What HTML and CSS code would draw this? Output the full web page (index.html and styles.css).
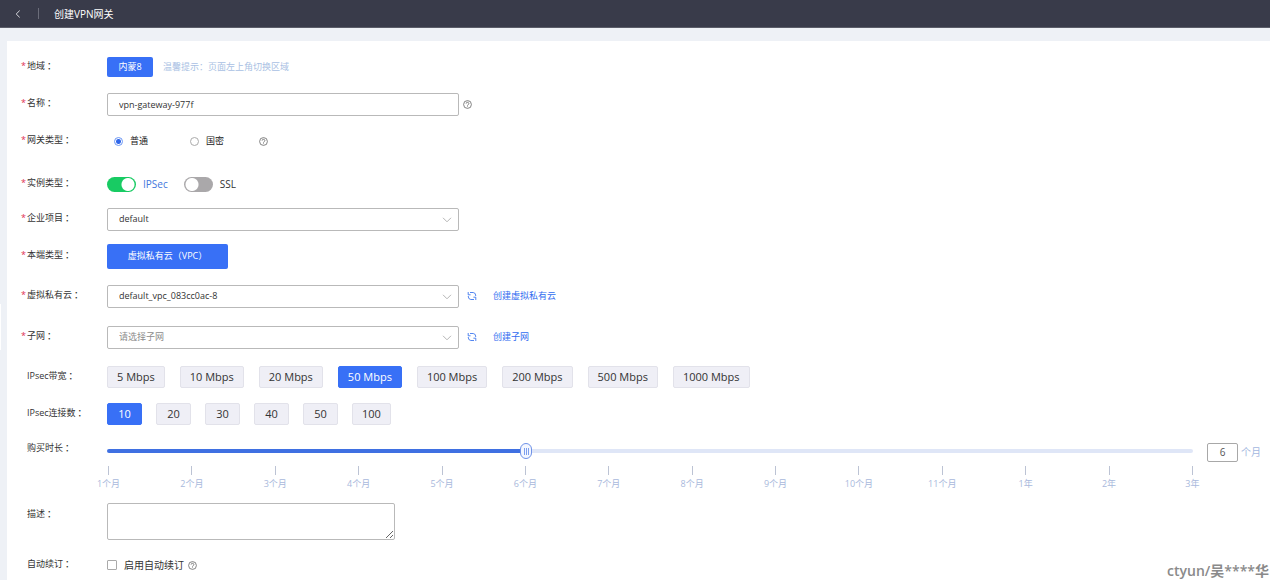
FILE: index.html
```html
<!DOCTYPE html>
<html lang="zh-CN">
<head>
<meta charset="utf-8">
<meta name="viewport" content="width=device-width, initial-scale=1">
<title>创建VPN网关</title>
<link rel="stylesheet" href="styles.css">
</head>
<body>
<svg class="sprite" aria-hidden="true">
  <symbol id="help" viewBox="0 0 9 9">
    <circle cx="4.5" cy="4.5" r="3.9"/>
    <path d="M3.1 3.6a1.4 1.3 0 1 1 2.1 1.1q-.7.3-.7 1M4.5 6.4v.7"/>
  </symbol>
  <symbol id="arrow" viewBox="0 0 10 6">
    <path d="M1 .8l4 4 4-4"/>
  </symbol>
  <symbol id="refresh" viewBox="0 0 10 10">
    <path d="M3 1.5H6.2Q8.8 1.7 8.8 5M1.2 1v2.8h2.4M7 8.5H3.8Q1.2 8.3 1.2 5M8.8 9V6.2H6.4"/>
  </symbol>
</svg>
<header class="topbar">
  <button class="back" type="button" aria-label="返回"><svg viewBox="0 0 6 8"><path d="M4.7.6L1.2 4l3.5 3.4"/></svg></button>
  <h1 class="title">创建VPN网关</h1>
</header>
<main class="page">
  <span class="drawer-handle"></span>
  <form class="card">
    <div class="row">
      <span class="label required">地域<span class="colon">：</span></span>
      <div class="control">
        <button class="btn region" type="button">内蒙8</button>
        <span class="tip">温馨提示：页面左上角切换区域</span>
      </div>
    </div>
    <div class="row">
      <label class="label required" for="name">名称<span class="colon">：</span></label>
      <div class="control name-control">
        <input class="field" id="name" type="text" value="vpn-gateway-977f">
        <svg class="help"><use href="#help"/></svg>
      </div>
    </div>
    <div class="row">
      <span class="label required">网关类型<span class="colon">：</span></span>
      <div class="control radios">
        <label class="radio"><input type="radio" name="gw" checked>普通</label>
        <label class="radio"><input type="radio" name="gw">国密</label>
        <svg class="help"><use href="#help"/></svg>
      </div>
    </div>
    <div class="row gap-xl">
      <span class="label required">实例类型<span class="colon">：</span></span>
      <div class="control switches">
        <label class="switch on"><input type="checkbox" checked>IPSec</label>
        <label class="switch"><input type="checkbox">SSL</label>
      </div>
    </div>
    <div class="row gap-s">
      <label class="label required" for="project">企业项目<span class="colon">：</span></label>
      <div class="control">
        <div class="select"><select class="field" id="project"><option>default</option></select><svg><use href="#arrow"/></svg></div>
      </div>
    </div>
    <div class="row">
      <span class="label required">本端类型<span class="colon">：</span></span>
      <div class="control"><button class="btn local" type="button">虚拟私有云（VPC）</button></div>
    </div>
    <div class="row gap-m">
      <label class="label required" for="vpc">虚拟私有云<span class="colon">：</span></label>
      <div class="control">
        <div class="select"><select class="field" id="vpc"><option>default_vpc_083cc0ac-8</option></select><svg><use href="#arrow"/></svg></div>
        <button class="refresh" type="button" aria-label="刷新"><svg><use href="#refresh"/></svg></button>
        <a class="link" href="#">创建虚拟私有云</a>
      </div>
    </div>
    <div class="row gap-l">
      <label class="label required" for="subnet">子网<span class="colon">：</span></label>
      <div class="control">
        <div class="select"><select class="field empty" id="subnet"><option>请选择子网</option></select><svg><use href="#arrow"/></svg></div>
        <button class="refresh" type="button" aria-label="刷新"><svg><use href="#refresh"/></svg></button>
        <a class="link" href="#">创建子网</a>
      </div>
    </div>
    <div class="row gap-m">
      <span class="label">IPsec带宽<span class="colon">：</span></span>
      <div class="control chips wide">
        <button class="chip" type="button">5 Mbps</button>
        <button class="chip" type="button">10 Mbps</button>
        <button class="chip" type="button">20 Mbps</button>
        <button class="chip active" type="button">50 Mbps</button>
        <button class="chip" type="button">100 Mbps</button>
        <button class="chip" type="button">200 Mbps</button>
        <button class="chip" type="button">500 Mbps</button>
        <button class="chip" type="button">1000 Mbps</button>
      </div>
    </div>
    <div class="row">
      <span class="label">IPsec连接数<span class="colon">：</span></span>
      <div class="control chips">
        <button class="chip active" type="button">10</button>
        <button class="chip" type="button">20</button>
        <button class="chip" type="button">30</button>
        <button class="chip" type="button">40</button>
        <button class="chip" type="button">50</button>
        <button class="chip" type="button">100</button>
      </div>
    </div>
    <div class="row gap-s">
      <label class="label" for="duration">购买时长<span class="colon">：</span></label>
      <div class="duration">
        <div class="slider">
          <input class="range" id="duration" type="range" min="1" max="14" value="6" style="--fill:38.5%">
          <ul class="ticks">
            <li>1个月</li><li>2个月</li><li>3个月</li><li>4个月</li><li>5个月</li><li>6个月</li><li>7个月</li><li>8个月</li><li>9个月</li><li>10个月</li><li>11个月</li><li>1年</li><li>2年</li><li>3年</li>
          </ul>
        </div>
        <label class="months"><input type="text" value="6">个月</label>
      </div>
    </div>
    <div class="row">
      <label class="label" for="desc">描述<span class="colon">：</span></label>
      <textarea class="desc" id="desc"></textarea>
    </div>
    <div class="row">
      <span class="label">自动续订<span class="colon">：</span></span>
      <div class="control">
        <label class="check"><input type="checkbox">启用自动续订</label>
        <svg class="help"><use href="#help"/></svg>
      </div>
    </div>
  </form>
  <div class="watermark">ctyun/吴****华</div>
</main>
</body>
</html>
```
FILE: styles.css
```css
* { box-sizing: border-box; }

body {
  margin: 0;
  height: 100vh;
  display: flex;
  flex-direction: column;
  overflow: hidden;
  background: #eef1f6;
  color: #333;
  font: 9px/20px "Open Sans", "Noto Sans CJK SC", sans-serif;
}

button, input, select, textarea { font: inherit; color: inherit; margin: 0; }
button { border: 0; padding: 0; background: none; cursor: pointer; }
svg { fill: none; stroke: currentColor; flex: none; }
.sprite { position: absolute; width: 0; height: 0; }

.topbar {
  height: 28px;
  flex: none;
  display: flex;
  align-items: center;
  padding-left: 15px;
  background: #393b4a;
  border-bottom: 1px solid #5b5d69;
  color: #fff;
}
.back { display: flex; width: 24px; height: 11px; align-items: center; border-right: 1px solid #6b6d7a; }
.back svg { width: 6px; height: 8px; color: #d8d9de; }
.title { margin: 0 0 0 15px; font-size: 10px; font-weight: 400; }

.page { position: relative; flex: 1; display: flex; min-height: 0; padding: 13px 0 0 7px; }
.drawer-handle { position: absolute; left: 0; top: 276px; width: 1px; height: 46px; background: #fff; }
.card { flex: 1; min-width: 0; padding: 14px 9px 0 14px; background: #fff; }

.row { display: flex; align-items: flex-start; margin-top: 13px; }
.row:first-child { margin-top: 0; }
.row.gap-s { margin-top: 11px; }
.row.gap-m { margin-top: 16px; }
.row.gap-l { margin-top: 17px; }
.row.gap-xl { margin-top: 19px; }

.label { flex: none; width: 86px; padding: 1px 0 0 6px; white-space: nowrap; }
.label.required { padding-left: 0; }
.label.required::before { content: "*"; display: inline-block; width: 6px; color: #e0304f; }
.colon { margin-left: 2px; font-weight: 500; }

.control { flex: 1; min-width: 0; height: 24px; display: flex; align-items: center; }

.btn { background: #3870f6; color: #fff; border-radius: 2px; }
.region { width: 46px; height: 20px; }
.local { width: 121px; height: 25px; }
.tip { margin-left: 10px; color: #a9bfe3; }

.field {
  width: 352px;
  height: 23px;
  padding: 0 11px;
  border: 1px solid #b9b9b9;
  border-radius: 2px;
  background: #fff;
  appearance: none;
  outline: 0;
}
.field.empty { color: #8c8c8c; }
.select { position: relative; display: flex; }
.select svg { position: absolute; right: 7px; top: 9px; width: 10px; height: 6px; color: #b5b5b5; pointer-events: none; }
.name-control { gap: 4px; }
.help { width: 9px; height: 9px; color: #666; stroke-width: 0.8; }

.radios { padding-left: 7px; }
.radio { display: flex; align-items: center; gap: 7px; width: 76px; color: #222; }
.radio + .help { margin-left: -7px; }
.radio input { appearance: none; width: 9px; height: 9px; border: 1px solid #aaa; border-radius: 50%; background: #fff; }
.radio input:checked { border-color: #6d97f3; background: radial-gradient(circle, #2f66ea 2px, #fff 3px); }

.switches { gap: 16px; }
.switch { display: flex; align-items: center; gap: 7px; font-size: 10px; }
.switch.on { color: #4477dd; }
.switch input {
  appearance: none;
  width: 29px;
  height: 15px;
  border-radius: 8px;
  background: radial-gradient(circle at 8px 50%, #fff 6px, transparent 7px), #aaa8aa;
}
.switch input:checked { background: radial-gradient(circle at 21px 50%, #fff 6px, transparent 7px), #18cb63; }

.refresh { display: flex; margin-left: 8px; color: #3f78ee; }
.refresh svg { width: 10px; height: 10px; stroke-width: 0.9; }
.link { margin-left: 16px; color: #2f6cf0; text-decoration: none; }

.chips { gap: 14px; }
.chips.wide { gap: 15px; }
.chip {
  height: 22px;
  min-width: 35px;
  padding: 0 9px;
  border: 1px solid #e2e2ea;
  border-radius: 2px;
  background: #efeff6;
  font-size: 11px;
  white-space: nowrap;
}
.chip.active { background: #3870f6; border-color: #3870f6; color: #fff; }

.duration { flex: 1; min-width: 0; display: flex; align-items: flex-start; gap: 14px; }
.slider { flex: 1; min-width: 0; }
.range { display: block; width: 100%; height: 28px; appearance: none; background: none; }
.range::-webkit-slider-runnable-track {
  height: 4px;
  border-radius: 2px;
  background: linear-gradient(to right, #3f70e2 var(--fill), #dfe6f7 var(--fill));
}
.range::-webkit-slider-thumb {
  appearance: none;
  width: 12px;
  height: 16px;
  margin-top: -6px;
  border: 1px solid #6f92e8;
  border-radius: 6px;
  background: repeating-linear-gradient(to right, #7d9fee 0 1px, transparent 1px 2px) center / 5px 7px no-repeat #f4f7ff;
}
.ticks { display: flex; justify-content: space-between; margin: 0; padding: 1px 0 0 1px; list-style: none; color: #a9b9dc; }
.ticks li { width: 1px; display: flex; flex-direction: column; align-items: center; white-space: nowrap; line-height: 13px; }
.ticks li::before { content: ""; width: 1px; height: 9px; margin-bottom: 2px; background: #bcc3d4; }
.months { display: flex; align-items: center; gap: 3px; height: 30px; color: #a3b7e0; font-size: 10px; }
.months input { width: 31px; height: 19px; padding: 0; border: 1px solid #a8a8a8; border-radius: 2px; text-align: center; color: #555; }

.desc { width: 288px; height: 37px; border: 1px solid #b9b9b9; border-radius: 2px; outline: 0; }

.check { display: flex; align-items: center; gap: 7px; font-size: 10px; }
.check input { appearance: none; width: 10px; height: 10px; border: 1px solid #aaa; border-radius: 1px; }
.check + .help { margin-left: 4px; }

.watermark { position: absolute; right: 1px; bottom: 0; font-size: 14px; line-height: 18px; font-weight: 600; color: #8a8a8a; }
```
